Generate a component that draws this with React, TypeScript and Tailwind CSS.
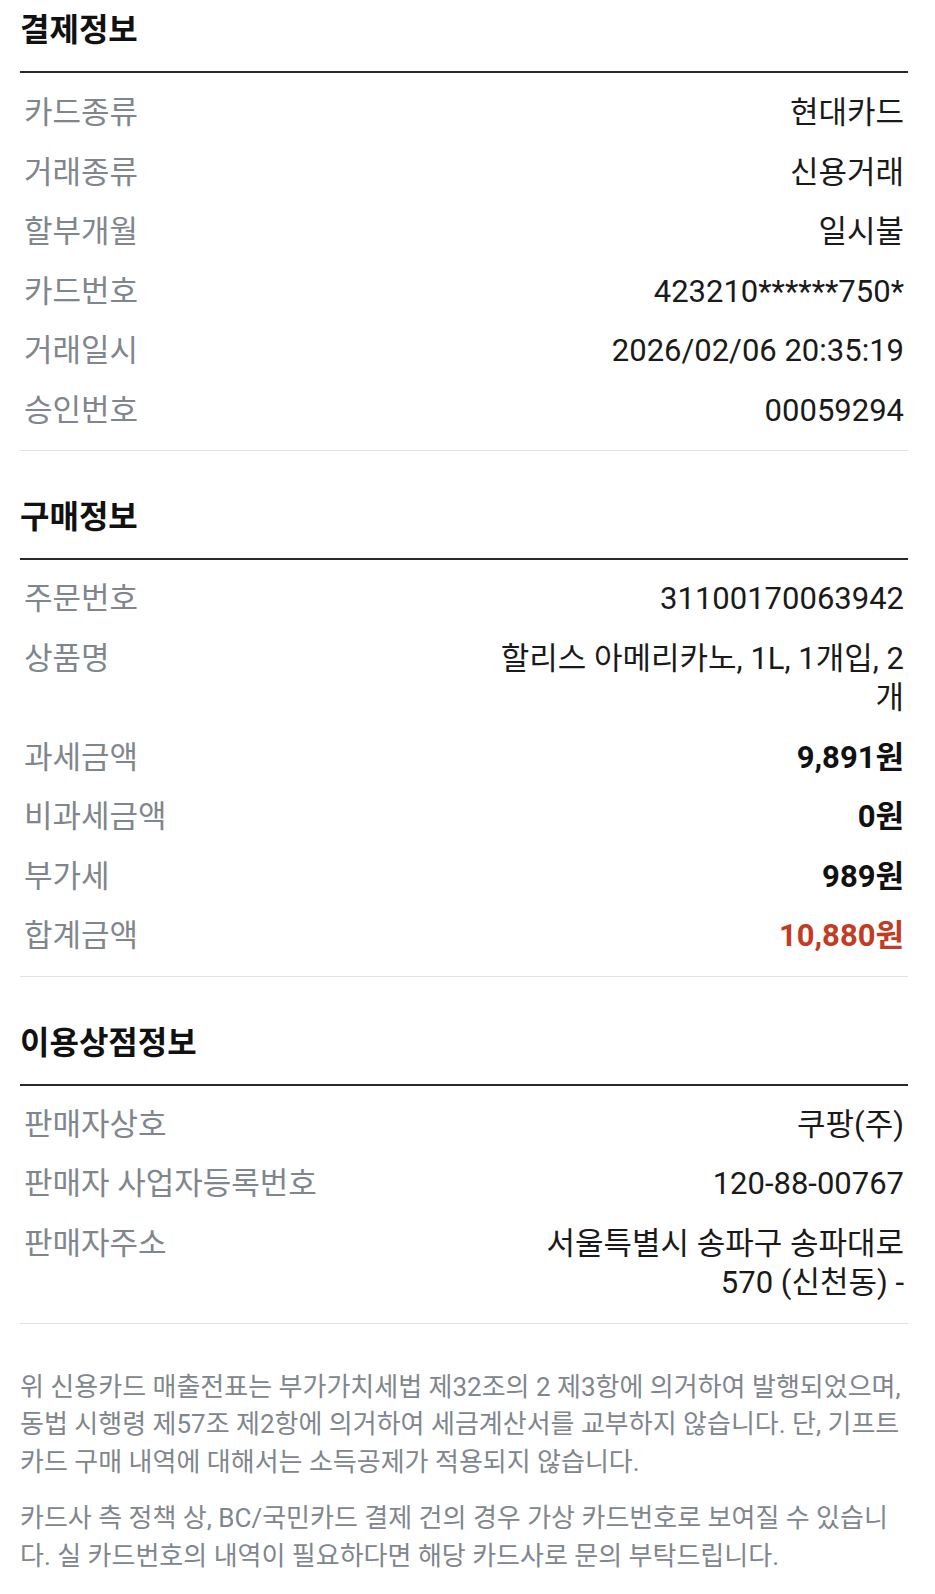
const font = { fontFamily: 'Roboto, "Noto Sans CJK KR", sans-serif' };

type Row = { label: string; value: string; tone?: "bold" | "red"; wrap?: string };

const payment: Row[] = [
  { label: "카드종류", value: "현대카드" },
  { label: "거래종류", value: "신용거래" },
  { label: "할부개월", value: "일시불" },
  { label: "카드번호", value: "423210******750*" },
  { label: "거래일시", value: "2026/02/06 20:35:19" },
  { label: "승인번호", value: "00059294" },
];

const purchase: Row[] = [
  { label: "주문번호", value: "31100170063942" },
  { label: "상품명", value: "할리스 아메리카노, 1L, 1개입, 2개", wrap: "max-w-[430px]" },
  { label: "과세금액", value: "9,891원", tone: "bold" },
  { label: "비과세금액", value: "0원", tone: "bold" },
  { label: "부가세", value: "989원", tone: "bold" },
  { label: "합계금액", value: "10,880원", tone: "red" },
];

const store: Row[] = [
  { label: "판매자상호", value: "쿠팡(주)" },
  { label: "판매자 사업자등록번호", value: "120-88-00767" },
  { label: "판매자주소", value: "서울특별시 송파구 송파대로 570 (신천동) -", wrap: "max-w-[400px]" },
];

function Section({ title, rows, first }: { title: string; rows: Row[]; first?: boolean }) {
  return (
    <section className="border-b border-[#e3e3e3]">
      <h2
        className={`${first ? "pt-[8px]" : "pt-[44px]"} pb-[19px] border-b-2 border-[#2a2a2a] text-[32px] leading-[44px] font-bold text-[#111]`}
      >
        {title}
      </h2>
      <div className={`${first ? "pt-[10px]" : "pt-[9px]"} pb-[10px]`}>
        {rows.map((r) => (
          <div key={r.label} className="flex justify-between gap-6 px-1 py-[10px] text-[31px] leading-[39.5px]">
            <span className="shrink-0 text-[#80868d]">{r.label}</span>
            <span
              className={`text-right ${r.wrap ?? ""} ${
                r.tone === "red"
                  ? "font-bold text-[#c23b22]"
                  : r.tone === "bold"
                    ? "font-bold text-[#111]"
                    : "text-[#1a1a1a]"
              }`}
            >
              {r.value}
            </span>
          </div>
        ))}
      </div>
    </section>
  );
}

export default function App() {
  return (
    <div className="min-h-[1594px] bg-white pl-5 pr-[27px]" style={font}>
      <Section title="결제정보" rows={payment} first />
      <Section title="구매정보" rows={purchase} />
      <Section title="이용상점정보" rows={store} />
      <div className="pt-[45px] text-[26px] leading-[37.5px] text-[#80868d]">
        <p>
          위 신용카드 매출전표는 부가가치세법 제32조의 2 제3항에 의거하여 발행되었으며, 동법 시행령 제57조 제2항에
          의거하여 세금계산서를 교부하지 않습니다. 단, 기프트카드 구매 내역에 대해서는 소득공제가 적용되지 않습니다.
        </p>
        <p className="mt-[19px]">
          카드사 측 정책 상, BC/국민카드 결제 건의 경우 가상 카드번호로 보여질 수 있습니다. 실 카드번호의 내역이
          필요하다면 해당 카드사로 문의 부탁드립니다.
        </p>
      </div>
    </div>
  );
}
